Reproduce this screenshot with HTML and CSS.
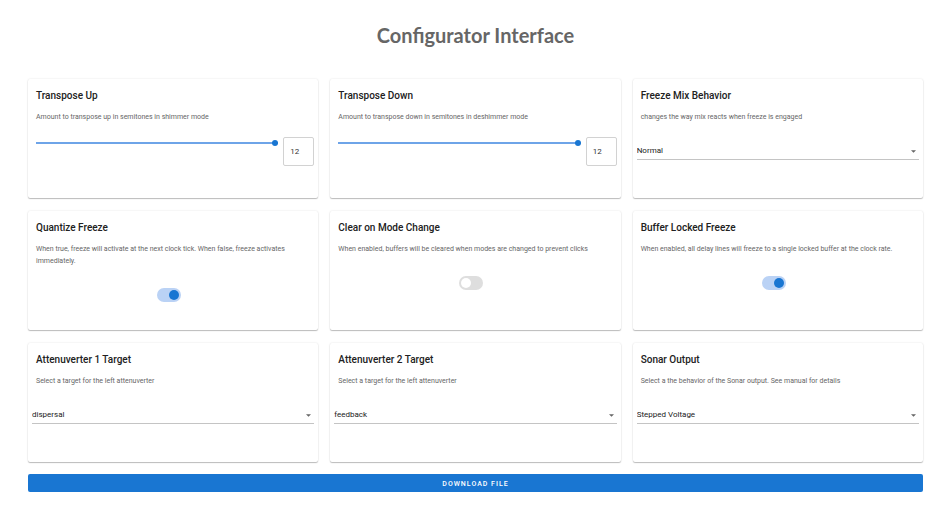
FILE: index.html
```html
<!DOCTYPE html>
<html lang="en">
<head>
<meta charset="utf-8">
<meta name="viewport" content="width=device-width, initial-scale=1">
<title>Configurator Interface</title>
<link rel="stylesheet" href="styles.css">
</head>
<body>
<main class="page">
  <h1 class="page-title">Configurator Interface</h1>
  <form class="config">
    <div class="grid">
      <section class="card">
        <h2 class="card-title" id="up">Transpose Up</h2>
        <p class="card-text">Amount to transpose up in semitones in shimmer mode</p>
        <div class="slider-row">
          <input class="slider" type="range" min="0" max="12" value="12" aria-labelledby="up">
          <input class="number" type="text" inputmode="numeric" value="12" aria-labelledby="up">
        </div>
      </section>
      <section class="card">
        <h2 class="card-title" id="down">Transpose Down</h2>
        <p class="card-text">Amount to transpose down in semitones in deshimmer mode</p>
        <div class="slider-row">
          <input class="slider" type="range" min="0" max="12" value="12" aria-labelledby="down">
          <input class="number" type="text" inputmode="numeric" value="12" aria-labelledby="down">
        </div>
      </section>
      <section class="card">
        <h2 class="card-title"><label for="mix">Freeze Mix Behavior</label></h2>
        <p class="card-text">changes the way mix reacts when freeze is engaged</p>
        <div class="select-row">
          <select class="select" id="mix"><option>Normal</option></select>
          <svg class="arrow" viewBox="0 0 6 3" aria-hidden="true"><path d="M0 0h6L3 3z"/></svg>
        </div>
      </section>
      <section class="card">
        <h2 class="card-title"><label for="quantize">Quantize Freeze</label></h2>
        <p class="card-text">When true, freeze will activate at the next clock tick. When false, freeze activates immediately.</p>
        <div class="switch-row"><input class="switch" type="checkbox" role="switch" id="quantize" checked></div>
      </section>
      <section class="card">
        <h2 class="card-title"><label for="clear">Clear on Mode Change</label></h2>
        <p class="card-text">When enabled, buffers will be cleared when modes are changed to prevent clicks</p>
        <div class="switch-row"><input class="switch" type="checkbox" role="switch" id="clear"></div>
      </section>
      <section class="card">
        <h2 class="card-title"><label for="buffer">Buffer Locked Freeze</label></h2>
        <p class="card-text">When enabled, all delay lines will freeze to a single locked buffer at the clock rate.</p>
        <div class="switch-row"><input class="switch" type="checkbox" role="switch" id="buffer" checked></div>
      </section>
      <section class="card">
        <h2 class="card-title"><label for="att1">Attenuverter 1 Target</label></h2>
        <p class="card-text">Select a target for the left attenuverter</p>
        <div class="select-row">
          <select class="select" id="att1"><option>dispersal</option></select>
          <svg class="arrow" viewBox="0 0 6 3" aria-hidden="true"><path d="M0 0h6L3 3z"/></svg>
        </div>
      </section>
      <section class="card">
        <h2 class="card-title"><label for="att2">Attenuverter 2 Target</label></h2>
        <p class="card-text">Select a target for the left attenuverter</p>
        <div class="select-row">
          <select class="select" id="att2"><option>feedback</option></select>
          <svg class="arrow" viewBox="0 0 6 3" aria-hidden="true"><path d="M0 0h6L3 3z"/></svg>
        </div>
      </section>
      <section class="card">
        <h2 class="card-title"><label for="sonar">Sonar Output</label></h2>
        <p class="card-text">Select a the behavior of the Sonar output. See manual for details</p>
        <div class="select-row">
          <select class="select" id="sonar"><option>Stepped Voltage</option></select>
          <svg class="arrow" viewBox="0 0 6 3" aria-hidden="true"><path d="M0 0h6L3 3z"/></svg>
        </div>
      </section>
    </div>
    <button class="download" type="button">DOWNLOAD FILE</button>
  </form>
</main>
</body>
</html>
```
FILE: styles.css
```css
* {
  box-sizing: border-box;
}

body {
  margin: 0;
  background: #fff;
  color: #212121;
  font-family: Roboto, "Liberation Sans", sans-serif;
}

.page {
  padding: 23px 14px 19px 28px;
}

.page-title {
  margin: 0 0 32px;
  font: 700 20px/24px "Century Gothic", Futura, Lato, sans-serif;
  color: #666;
  text-align: center;
}

.config {
  display: flex;
  flex-direction: column;
  gap: 12px;
}

.grid {
  display: grid;
  grid-template-columns: repeat(3, minmax(0, 1fr));
  gap: 13px 12px;
}

.card {
  min-height: 119px;
  padding: 9px 4px 8px;
  border-radius: 2px;
  background: #fff;
  box-shadow: 0 1px 1px rgba(0, 0, 0, .24), 0 0 2px rgba(0, 0, 0, .12);
}

.card-title {
  margin: 0;
  padding: 0 4px;
  font-size: 10px;
  line-height: 16px;
  font-weight: 500;
}

.card-text {
  margin: 7px 0 0;
  padding: 0 4px;
  font-size: 7px;
  line-height: 12px;
  color: #666;
}

.slider-row {
  display: flex;
  align-items: flex-start;
  gap: 5px;
  margin-top: 14px;
  padding-left: 4px;
}

.slider {
  flex: 1;
  min-width: 0;
  height: 12px;
  margin: 0;
  appearance: none;
  background: linear-gradient(#6ea4e8, #6ea4e8) center / 100% 2px no-repeat;
}

.slider::-webkit-slider-thumb {
  appearance: none;
  width: 6px;
  height: 6px;
  border-radius: 50%;
  background: #1976d2;
}

.number {
  width: 31px;
  height: 29px;
  padding: 0 6px;
  border: 1px solid #d2d2d2;
  border-radius: 2px;
  background: #fff;
  color: #333;
  font: 400 8px/12px Roboto, sans-serif;
}

.select-row {
  display: flex;
  align-items: center;
  margin-top: 20px;
  padding-right: 3px;
  border-bottom: 1px solid #c4c4c4;
}

.select {
  flex: 1;
  min-width: 0;
  height: 16px;
  padding: 0;
  border: 0;
  appearance: none;
  background: transparent;
  color: #212121;
  font: 400 8px/16px Roboto, sans-serif;
}

.arrow {
  width: 5px;
  height: 3px;
  fill: #666;
}

.switch-row {
  display: flex;
  justify-content: center;
  margin-top: 21px;
  padding-right: 8px;
}

.switch {
  display: flex;
  align-items: center;
  width: 24px;
  height: 14px;
  margin: 0;
  padding: 0 2px;
  appearance: none;
  border-radius: 7px;
  background: #dedede;
}

.switch::before {
  content: "";
  width: 10px;
  height: 10px;
  border-radius: 50%;
  background: #fff;
}

.switch:checked {
  justify-content: flex-end;
  background: #bad2f5;
}

.switch:checked::before {
  background: #1976d2;
}

.download {
  height: 18px;
  border: 0;
  border-radius: 2px;
  background: #1976d2;
  color: #fff;
  font: 500 7px/18px Roboto, sans-serif;
  letter-spacing: 1px;
}
```
